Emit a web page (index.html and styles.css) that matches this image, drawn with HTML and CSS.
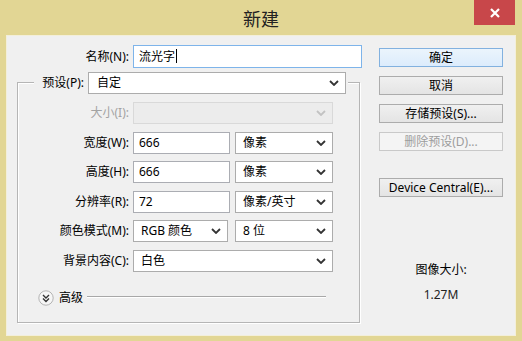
FILE: index.html
```html
<!DOCTYPE html>
<html lang="zh-CN">
<head>
<meta charset="utf-8">
<title>新建</title>
<link rel="stylesheet" href="styles.css">
</head>
<body>
<div class="window">
  <div class="titlebar">
    <span></span>
    <span class="title">新建</span>
    <span class="close"><svg width="12" height="10" viewBox="0 0 12 10"><path d="M2 1 L10 9 M10 1 L2 9" stroke="#fff" stroke-width="2.2" fill="none"/></svg></span>
  </div>
  <div class="client">
    <div class="form">
      <div class="name-row">
        <span class="lbl">名称(N):</span>
        <div class="input focus">流光字<span class="caret"></span></div>
      </div>
      <fieldset class="group">
        <legend class="legend">
          <div class="legend-in">
            <span class="lbl preset-lbl">预设(P):</span>
            <div class="select preset">自定<svg class="chev" width="10" height="6" viewBox="0 0 10 6"><polyline points="1,1 5,5 9,1"/></svg></div>
          </div>
        </legend>
        <div class="frow first">
          <span class="lbl disabled-lbl">大小(I):</span>
          <div class="select disabled w200"><span></span><svg class="chev" width="10" height="6" viewBox="0 0 10 6"><polyline points="1,1 5,5 9,1"/></svg></div>
        </div>
        <div class="frow">
          <span class="lbl">宽度(W):</span>
          <div class="pair">
            <div class="input num">666</div>
            <div class="select unit">像素<svg class="chev" width="10" height="6" viewBox="0 0 10 6"><polyline points="1,1 5,5 9,1"/></svg></div>
          </div>
        </div>
        <div class="frow">
          <span class="lbl">高度(H):</span>
          <div class="pair">
            <div class="input num">666</div>
            <div class="select unit">像素<svg class="chev" width="10" height="6" viewBox="0 0 10 6"><polyline points="1,1 5,5 9,1"/></svg></div>
          </div>
        </div>
        <div class="frow">
          <span class="lbl">分辨率(R):</span>
          <div class="pair">
            <div class="input num">72</div>
            <div class="select unit">像素/英寸<svg class="chev" width="10" height="6" viewBox="0 0 10 6"><polyline points="1,1 5,5 9,1"/></svg></div>
          </div>
        </div>
        <div class="frow">
          <span class="lbl">颜色模式(M):</span>
          <div class="pair wide-gap">
            <div class="select mode">RGB 颜色<svg class="chev" width="10" height="6" viewBox="0 0 10 6"><polyline points="1,1 5,5 9,1"/></svg></div>
            <div class="select unit">8 位<svg class="chev" width="10" height="6" viewBox="0 0 10 6"><polyline points="1,1 5,5 9,1"/></svg></div>
          </div>
        </div>
        <div class="frow">
          <span class="lbl">背景内容(C):</span>
          <div class="select w200">白色<svg class="chev" width="10" height="6" viewBox="0 0 10 6"><polyline points="1,1 5,5 9,1"/></svg></div>
        </div>
        <div class="adv">
          <svg class="adv-icon" width="16" height="16" viewBox="0 0 16 16">
            <circle cx="8" cy="8" r="7.2" fill="#f6f6f6" stroke="#b4b4b4" stroke-width="1"/>
            <polyline points="5,5 8,8 11,5" fill="none" stroke="#333" stroke-width="1.4"/>
            <polyline points="5,8.5 8,11.5 11,8.5" fill="none" stroke="#333" stroke-width="1.4"/>
          </svg>
          <span class="adv-text">高级</span>
          <span class="adv-line"></span>
        </div>
      </fieldset>
    </div>
    <div class="side">
      <div class="btn default">确定</div>
      <div class="btn">取消</div>
      <div class="btn">存储预设(S)...</div>
      <div class="btn disabled">删除预设(D)...</div>
      <div class="btn device">Device Central(E)...</div>
      <div class="imgsize">
        <div class="imgsize-lbl">图像大小:</div>
        <div class="imgsize-val">1.27M</div>
      </div>
    </div>
  </div>
</div>
</body>
</html>
```

FILE: styles.css
```css
* { box-sizing: border-box; }
html, body { margin: 0; padding: 0; }
body {
  width: 522px;
  height: 341px;
  overflow: hidden;
  font-family: "Noto Sans", "Noto Sans CJK SC", sans-serif;
  font-size: 12px;
  color: #000;
}
.window {
  width: 522px;
  height: 341px;
  background: #e2d694;
  display: flex;
  flex-direction: column;
}
.titlebar {
  height: 36px;
  display: grid;
  grid-template-columns: 1fr auto 1fr;
  align-items: start;
}
.title {
  font-family: "Noto Sans CJK SC", sans-serif;
  font-size: 18px;
  line-height: 36px;
  color: #222;
}
.close {
  justify-self: end;
  margin-right: 7px;
  width: 41px;
  height: 25px;
  background: #c8474a;
  display: flex;
  align-items: center;
  justify-content: center;
}
.client {
  margin: 0 7px;
  height: 299px;
  background: #f0f0f0;
  box-shadow: 0 0 0 1px #f3efda;
  display: flex;
}
.form {
  width: 372px;
  flex: none;
  padding: 9px 0 0 10px;
}
.lbl {
  text-align: right;
  white-space: nowrap;
  line-height: 16px;
}
.name-row {
  display: grid;
  grid-template-columns: 112px 229px;
  column-gap: 4px;
  align-items: center;
  height: 23px;
}
.input {
  height: 22px;
  background: #fff;
  border: 1px solid #abadb3;
  padding: 0 5px;
  line-height: 20px;
  white-space: nowrap;
}
.input.focus {
  height: 23px;
  border-color: #7eb4ea;
  line-height: 21px;
}
.caret {
  display: inline-block;
  width: 1px;
  height: 14px;
  background: #000;
  vertical-align: -2px;
  margin-left: 1px;
}
.group {
  margin: 2px 0 0 0;
  width: 343px;
  min-width: 0;
  padding: 0 0 16px 0;
  border: 1px solid #b5b5b5;
  box-shadow: inset 1px 1px 0 #fff, 1px 1px 0 #fff;
}
.legend {
  margin-left: 16px;
  padding: 2px 2px 0;
  background: #f0f0f0;
}
.legend-in {
  display: flex;
  align-items: center;
  gap: 4px;
}
.preset-lbl { width: 48px; }
.select {
  height: 22px;
  background: #fff;
  border: 1px solid #acacac;
  padding: 0 6px 0 7px;
  display: flex;
  align-items: center;
  justify-content: space-between;
  line-height: 20px;
  white-space: nowrap;
}
.chev {
  flex: none;
  fill: none;
  stroke: #333;
  stroke-width: 1.8;
}
.preset { width: 258px; padding-left: 8px; }
.w200 { width: 200px; }
.unit { width: 98px; }
.mode { width: 95px; }
.num { width: 97px; }
.select.disabled {
  background: #ececec;
  border-color: #d9d9d9;
}
.select.disabled .chev { stroke: #c2c2c2; }
.disabled-lbl { color: #a3a3a3; }
.frow {
  display: grid;
  grid-template-columns: 111px auto;
  column-gap: 4px;
  align-items: center;
  height: 22px;
  margin-top: 7.5px;
}
.frow.first { margin-top: 8px; }
.pair {
  display: flex;
  gap: 5px;
}
.pair.wide-gap { gap: 7px; }
.adv {
  display: flex;
  align-items: center;
  height: 16px;
  margin: 18.5px 0 0 20px;
}
.adv-icon { flex: none; }
.adv-text {
  margin-left: 5px;
  line-height: 16px;
}
.adv-line {
  width: 239px;
  height: 2px;
  margin-left: 4px;
  margin-top: -2px;
  border-top: 1px solid #a8a8a8;
  border-bottom: 1px solid #fff;
}
.side {
  width: 124px;
  flex: none;
  padding-top: 12px;
  display: flex;
  flex-direction: column;
  gap: 9px;
}
.btn {
  height: 19px;
  border: 1px solid #acacac;
  background: linear-gradient(#f0f0f0, #e4e4e4);
  text-align: center;
  line-height: 17px;
  white-space: nowrap;
}
.btn.default {
  border-color: #82b1df;
  background: linear-gradient(#ebf4fc, #dcecfc);
}
.btn.disabled {
  color: #9d9d9d;
  border-color: #c9c9c9;
  background: #f4f4f4;
}
.btn.device { margin-top: 18px; }
.imgsize {
  margin-top: 56px;
  text-align: center;
  line-height: 16px;
}
.imgsize-val {
  margin-top: 9px;
  color: #222;
}
```
